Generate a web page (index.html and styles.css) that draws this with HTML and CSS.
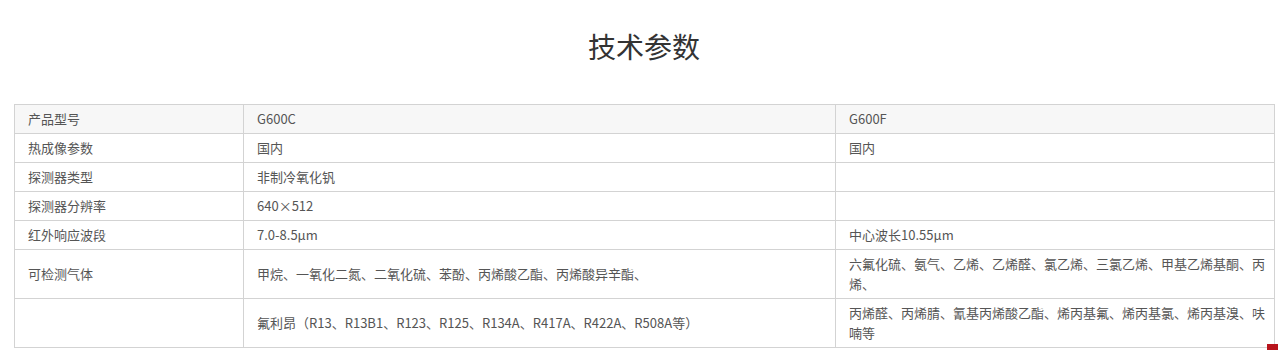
FILE: index.html
```html
<!DOCTYPE html>
<html lang="zh-CN">
<head>
<meta charset="utf-8">
<title>技术参数</title>
<link rel="stylesheet" href="styles.css">
</head>
<body>
<div class="page">
  <h2 class="title">技术参数</h2>
  <table class="spec">
    <colgroup>
      <col class="c1">
      <col class="c2">
      <col class="c3">
    </colgroup>
    <tr class="head">
      <td>产品型号</td>
      <td>G600C</td>
      <td>G600F</td>
    </tr>
    <tr>
      <td>热成像参数</td>
      <td>国内</td>
      <td>国内</td>
    </tr>
    <tr>
      <td>探测器类型</td>
      <td>非制冷氧化钒</td>
      <td></td>
    </tr>
    <tr>
      <td>探测器分辨率</td>
      <td>640×512</td>
      <td></td>
    </tr>
    <tr>
      <td>红外响应波段</td>
      <td>7.0-8.5μm</td>
      <td>中心波长10.55μm</td>
    </tr>
    <tr>
      <td>可检测气体</td>
      <td>甲烷、一氧化二氮、二氧化硫、苯酚、丙烯酸乙酯、丙烯酸异辛酯、</td>
      <td>六氟化硫、氨气、乙烯、乙烯醛、氯乙烯、三氯乙烯、甲基乙烯基酮、丙烯、</td>
    </tr>
    <tr>
      <td></td>
      <td>氟利昂（R13、R13B1、R123、R125、R134A、R417A、R422A、R508A等）</td>
      <td>丙烯醛、丙烯腈、氰基丙烯酸乙酯、烯丙基氟、烯丙基氯、烯丙基溴、呋喃等</td>
    </tr>
  </table>
</div>
<div class="corner-btn"></div>
</body>
</html>
```

FILE: styles.css
```css
html, body {
  margin: 0;
  padding: 0;
  background: #ffffff;
}

body {
  font-family: "Noto Sans CJK SC", "Noto Sans", sans-serif;
  color: #555555;
}

.page {
  padding: 0 0 0 14px;
}

.title {
  margin: 0;
  padding-top: 26px;
  padding-right: 4px;
  font-size: 28px;
  line-height: 40px;
  font-weight: normal;
  color: #333333;
  text-align: center;
}

.spec {
  margin-top: 38px;
  width: 1260px;
  border-collapse: collapse;
  table-layout: fixed;
  font-size: 13px;
  line-height: 20px;
}

.c1 { width: 229px; }
.c2 { width: 592px; }
.c3 { width: 439px; }

.spec td {
  border: 1px solid #d3d3d3;
  padding: 4px 6px 4px 13px;
  vertical-align: middle;
  color: #555555;
}

.spec tr.head td {
  background: #f7f7f7;
}

.spec tr:nth-child(6) td,
.spec tr:nth-child(7) td {
  height: 40px;
}

.corner-btn {
  position: fixed;
  right: 0;
  top: 344px;
  width: 11px;
  height: 40px;
  background: #b8141c;
}
```
